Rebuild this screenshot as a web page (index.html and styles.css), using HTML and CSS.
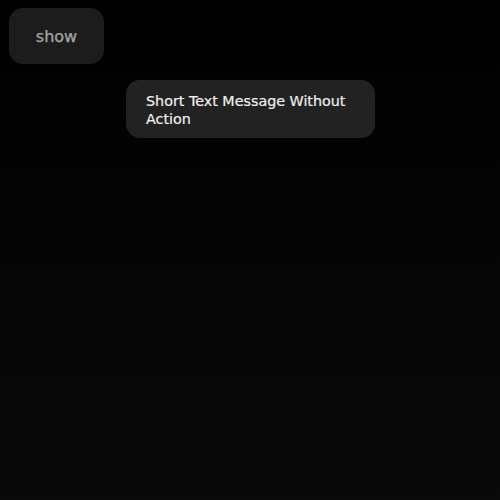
FILE: index.html
```html
<!DOCTYPE html>
<html>
<head>
<meta charset="utf-8">
<link rel="stylesheet" href="styles.css">
</head>
<body>
<div class="page">
  <button class="show-btn">show</button>
  <div class="toast-row">
    <div class="toast">Short Text Message Without Action</div>
  </div>
</div>
</body>
</html>
```
FILE: styles.css
```css
html, body {
  margin: 0;
  padding: 0;
  height: 100%;
  background: #000;
}
body {
  font-family: "DejaVu Sans", sans-serif;
}
.page {
  height: 100%;
  box-sizing: border-box;
  padding: 8px 0 0 9px;
  background: linear-gradient(to bottom, #000 0%, #050505 50%, #090909 100%);
  display: flex;
  flex-direction: column;
}
.show-btn {
  width: 95px;
  height: 56px;
  border: none;
  border-radius: 14px;
  background: #1c1c1c;
  color: #a6a6a6;
  font-family: "DejaVu Sans", sans-serif;
  font-size: 16px;
  -webkit-text-stroke: 0.25px #a6a6a6;
  padding: 0;
  align-self: flex-start;
}
.toast-row {
  padding: 16px 0 0 117px;
  display: flex;
}
.toast {
  width: 209px;
  padding: 12px 20px 10px 20px;
  border-radius: 14px;
  background: #222;
  color: #f0f0f0;
  font-size: 14.3px;
  -webkit-text-stroke: 0.2px #f0f0f0;
  line-height: 18px;
}
```
